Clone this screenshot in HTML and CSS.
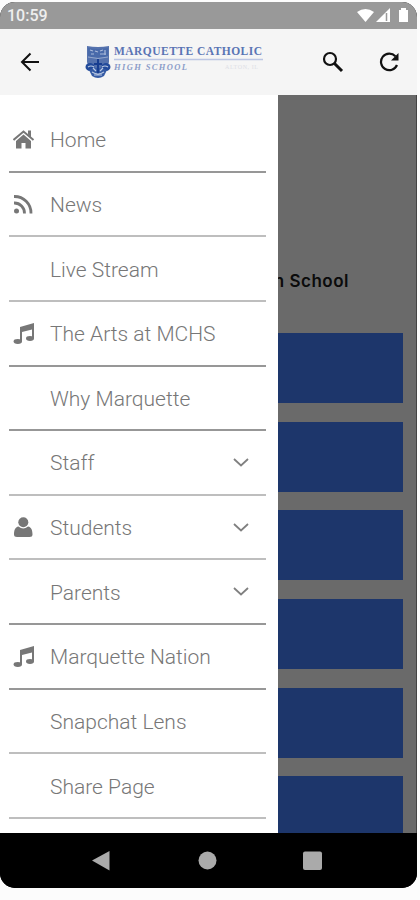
FILE: index.html
```html
<!DOCTYPE html>
<html lang="en">
<head>
<meta charset="utf-8">
<title>Marquette Catholic High School</title>
<link rel="stylesheet" href="styles.css">
</head>
<body>
<div class="phone">
  <div class="status">
    <span class="time">10:59</span>
    <svg class="status-icons" width="54" height="18" viewBox="0 0 54 18" fill="#fff">
      <path d="M1 5Q9.500-1 18 5L9.500 15Z"/>
      <path d="M20 15L34 1V15Z"/><path d="M30.500 6V14" stroke="#999" stroke-width="1.500"/>
      <path d="M43 3h2V1h5v2h2v12h-9Z"/>
    </svg>
  </div>
  <header class="appbar">
    <svg class="back" width="20" height="20" viewBox="0 0 20 20" fill="none" stroke="#111" stroke-width="2"><path d="M19 10H2M10.500 1.500L2 10l8.500 8.500"/></svg>
    <div class="brand">
      <svg width="26" height="34" viewBox="0 0 26 34">
        <path d="M2 1Q13 3 24 1V17Q23 25 13 29Q3 25 2 17Z" fill="#5572ad"/>
        <path d="M3 3Q13 5 23 3V11Q13 14 3 11Z" fill="#496aaa"/>
        <path d="M5 5l3 1M10 6l3 1M15 6l3-1M15 9h6M20 5v5M6 9h3" stroke="#a9b9d9" stroke-width="1.200"/>
        <path d="M3 12Q13 15 23 12" stroke="#93a7cd" fill="none"/>
        <ellipse cx="5" cy="22" rx="4.500" ry="4" fill="#234b9b"/><ellipse cx="21" cy="22" rx="4.500" ry="4" fill="#234b9b"/>
        <path d="M4 25Q13 20 22 25L19 31Q13 35 7 31Z" fill="#355ba4"/>
        <path d="M13 14V29M9 19h8" stroke="#173d90" stroke-width="2"/>
        <path d="M3 22q3-2 6 0M17 22q3-2 6 0M7 27q6 4 12 0M9 30h8M8 23l3 3M18 23l-3 3" stroke="#b9c8e2" stroke-width="1.200" fill="none"/>
      </svg>
      <div class="brand-text">
        <svg class="wordmark" width="150" height="28" viewBox="0 0 150 28">
          <text class="name" x="0" y="10" textLength="148" lengthAdjust="spacing">MARQUETTE CATHOLIC</text>
          <path d="M0 14.500H149" stroke="#bcc6e4" stroke-width="1.500"/>
          <text class="sub" x="0" y="25" textLength="73" lengthAdjust="spacing">HIGH SCHOOL</text>
          <text class="place" x="111" y="24" textLength="33">ALTON, IL</text>
        </svg>
      </div>
    </div>
    <svg class="search" width="22" height="22" viewBox="0 0 22 22" fill="none" stroke="#111"><circle cx="8" cy="8" r="6" stroke-width="2.200"/><path d="M12.500 12.500L20 20" stroke-width="3"/></svg>
    <svg class="reload" width="20" height="20" viewBox="0 0 20 20"><path d="M16.400 4.200A8.300 8.300 0 1 0 18 13" fill="none" stroke="#111" stroke-width="2.200"/><path d="M19.500 1V8.500H12Z" fill="#111"/></svg>
  </header>
  <main class="screen">
    <nav class="drawer">
      <a class="item dark"><svg class="icon" viewBox="0 0 22 22"><path d="M.5 11L10.500 2.500 20.500 11" fill="none" stroke="#777" stroke-width="2"/><path d="M15 1.500h3v7l-3-3ZM10.500 5.500L18 12v7.500H12.500V14h-4v5.500H3V12Z" fill="#777"/></svg><span>Home</span></a>
      <a class="item"><svg class="icon" viewBox="0 0 22 22"><circle cx="3.500" cy="17" r="2.500" fill="#777"/><path d="M1 9A10 10 0 0 1 11.500 19.500M1 2.500A16.500 16.500 0 0 1 18 19.500" fill="none" stroke="#777" stroke-width="2.800"/></svg><span>News</span></a>
      <a class="item"><i class="icon"></i><span>Live Stream</span></a>
      <a class="item dark"><svg class="icon" viewBox="0 0 22 22"><use href="#note"/></svg><span>The Arts at MCHS</span></a>
      <a class="item dark"><i class="icon"></i><span>Why Marquette</span></a>
      <a class="item"><i class="icon"></i><span>Staff</span><svg class="chev" viewBox="0 0 16 9"><path d="M1 1l7 6.500L15 1"/></svg></a>
      <a class="item"><svg class="icon" viewBox="0 0 22 22" fill="#777"><path d="M5.500 9.500C2 10 1 13.500 1 17.500q0 2.500 3 2.500h12.500q3 0 3-2.500c0-4-1-7.500-4.500-8q-4.800 4-9.500 0Z"/><circle cx="10.300" cy="5.300" r="5"/></svg><span>Students</span><svg class="chev" viewBox="0 0 16 9"><path d="M1 1l7 6.500L15 1"/></svg></a>
      <a class="item dark"><i class="icon"></i><span>Parents</span><svg class="chev" viewBox="0 0 16 9"><path d="M1 1l7 6.500L15 1"/></svg></a>
      <a class="item dark"><svg class="icon" viewBox="0 0 22 22"><g id="note" fill="#777"><path d="M7 4L21 0V15.500H19V6.500L9 9V18.500H7Z"/><ellipse cx="4.800" cy="18.500" rx="4.200" ry="2.400"/><ellipse cx="17" cy="15.500" rx="4" ry="2.400"/></g></svg><span>Marquette Nation</span></a>
      <a class="item"><i class="icon"></i><span>Snapchat Lens</span></a>
      <a class="item"><i class="icon"></i><span>Share Page</span></a>
    </nav>
    <section class="content">
      <h1>High School</h1>
      <div class="tile"></div><div class="tile"></div><div class="tile"></div><div class="tile"></div><div class="tile"></div><div class="tile"></div>
    </section>
  </main>
  <footer class="navbar">
    <svg width="417" height="55" viewBox="0 0 417 55" fill="#aaa"><path d="M92 27.500L109.500 18V37.500Z"/><circle cx="207.500" cy="27.500" r="9"/><rect x="303" y="18.500" width="19" height="18.500" rx="2"/></svg>
  </footer>
</div>
</body>
</html>
```
FILE: styles.css
```css
* { box-sizing: border-box; }
body {
  margin: 0;
  height: 900px;
  padding-top: 2px;
  overflow: hidden;
  background: #fcfcfc;
  font-family: Roboto, sans-serif;
}
.phone {
  display: flex;
  flex-direction: column;
  width: 417px;
  height: 886px;
  border-radius: 15px;
  overflow: hidden;
  background: #000;
}
.status {
  display: flex;
  justify-content: space-between;
  align-items: center;
  height: 27px;
  flex: none;
  padding: 0 7px 0 7px;
  background: #999;
}
.time { color: #eee; font-size: 16px; font-weight: 500; }
.appbar {
  display: flex;
  align-items: center;
  height: 66px;
  flex: none;
  padding-left: 20px;
  background: #f5f5f5;
}
.brand { display: flex; align-items: flex-start; margin-left: 45px; }
.brand-text { margin-left: 3px; }
.brand svg { display: block; }
.name { font: 700 11.500px "Liberation Serif", serif; fill: #5a74b4; }
.sub { font: italic 700 8.500px "Liberation Serif", serif; fill: #8c9dc9; }
.place { font: 6px "Liberation Serif", serif; fill: #dde0e5; }
.search { margin-left: 58px; }
.reload { margin-left: 35px; }
.screen { display: flex; height: 738px; flex: none; background: #6a6a6a; }
.drawer {
  width: 278px;
  flex: none;
  padding: 13px 12px 0 9px;
  background: #fff;
}
.item {
  display: flex;
  align-items: center;
  height: 64.640px;
  padding: 2px 17px 0 4px;
  border-bottom: 2px solid #bebebe;
  color: #777;
  font-size: 21px;
  font-weight: 350;
  letter-spacing: 0;
}
.item.dark { border-bottom-color: #979797; }
.icon { width: 22px; height: 22px; margin-right: 15px; flex: none; }
.item span { white-space: nowrap; }
.chev {
  width: 16px;
  height: 9px;
  margin: -2px 0 0 auto;
  fill: none;
  stroke: #808080;
  stroke-width: 1.800;
}
.content {
  flex: 1;
  min-width: 0;
  overflow: hidden;
  padding-right: 13px;
  border-right: 1px solid #444;
}
h1 {
  display: flex;
  justify-content: flex-end;
  margin: 175px 54px 40px 0;
  height: 23px;
  white-space: nowrap;
  font: 600 17px/23px Inter, sans-serif;
  letter-spacing: .5px;
  color: #0b0b0b;
}
.tile { height: 70px; margin-bottom: 18.700px; background: #1d366b; }
.navbar { height: 55px; flex: none; background: #000; }
.navbar svg { display: block; }
```
